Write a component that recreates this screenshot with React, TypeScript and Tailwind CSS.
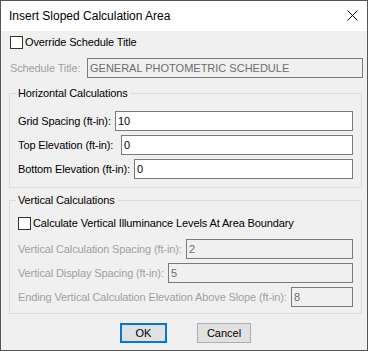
import React from "react";

const ui = { fontFamily: '"Liberation Sans", Arial, sans-serif' };

function Check({ label }: { label: string }) {
  return (
    <div className="flex items-center h-[13px]">
      <div className="w-[13px] h-[13px] border border-[#333333] bg-white shrink-0" />
      <span className="ml-[2px] text-[11px] tracking-[-0.12px] text-black leading-none">{label}</span>
    </div>
  );
}

function Field({ label, value, left, disabled = false }: { label: string; value: string; left: number; disabled?: boolean }) {
  return (
    <div className="flex items-center h-[20px]">
      <span
        className={
          "text-[11px] tracking-[-0.12px] leading-none whitespace-nowrap " +
          (disabled ? "text-[#a0a0a0]" : "text-black")
        }
        style={{ width: left }}
      >
        {label}
      </span>
      <div
        className={
          "flex-1 h-[20px] border border-[#7a7a7a] flex items-center pl-[2px] text-[11px] leading-none " +
          (disabled ? "bg-[#f0f0f0] text-[#6d6d6d]" : "bg-white text-black")
        }
      >
        {value}
      </div>
    </div>
  );
}

function Group({ title, children, className }: { title: string; children: React.ReactNode; className?: string }) {
  return (
    <div className={"relative border border-[#dcdcdc] ml-[8px] mr-[5px] pl-[8px] pr-[8px] " + (className ?? "")}>
      <span className="absolute -top-[7px] left-[6px] px-[2px] bg-[#f0f0f0] text-[11px] tracking-[-0.12px] leading-[13px] text-black">
        {title}
      </span>
      {children}
    </div>
  );
}

export default function App() {
  return (
    <div className="w-[368px] h-[351px] border border-[#555555] bg-[#f0f0f0] flex flex-col" style={ui}>
      {/* title bar */}
      <div className="h-[30px] bg-white flex items-center justify-between pl-[8px] pr-[9px]">
        <span className="text-[12px] text-black">Insert Sloped Calculation Area</span>
        <svg width="11" height="11" viewBox="0 0 11 11" className="mb-[1px]">
          <path d="M0.5 0.5 L10.5 10.5 M10.5 0.5 L0.5 10.5" stroke="#000" strokeWidth="1" />
        </svg>
      </div>

      <div className="flex flex-col">
        <div className="pl-[9px] mt-[5px]">
          <Check label="Override Schedule Title" />
        </div>

        <div className="pl-[9px] pr-[4px] mt-[9px]">
          <Field label="Schedule Title:" value="GENERAL PHOTOMETRIC SCHEDULE" left={77} disabled />
        </div>

        <Group title="Horizontal Calculations" className="mt-[15px] pt-[17px] pb-[8px]">
          <div className="flex flex-col gap-[4px]">
            <Field label="Grid Spacing (ft-in):" value="10" left={97} />
            <Field label="Top Elevation (ft-in):" value="0" left={103} />
            <Field label="Bottom Elevation (ft-in):" value="0" left={116} />
          </div>
        </Group>

        <Group title="Vertical Calculations" className="mt-[12px] pt-[16px] pb-[6px]">
          <Check label="Calculate Vertical Illuminance Levels At Area Boundary" />
          <div className="flex flex-col gap-[4px] mt-[9px]">
            <Field label="Vertical Calculation Spacing (ft-in):" value="2" left={168} disabled />
            <Field label="Vertical Display Spacing (ft-in):" value="5" left={150} disabled />
            <Field label="Ending Vertical Calculation Elevation Above Slope (ft-in):" value="8" left={273} disabled />
          </div>
        </Group>

        <div className="flex justify-center gap-[30px] mt-[9px] pl-[3px]">
          <button className="w-[47px] h-[20px] border-2 border-[#0078d7] bg-[#e1e1e1] text-[11px] text-black leading-none">
            OK
          </button>
          <button className="w-[54px] h-[20px] border border-[#adadad] bg-[#e1e1e1] text-[11px] text-black leading-none">
            Cancel
          </button>
        </div>
      </div>
    </div>
  );
}
